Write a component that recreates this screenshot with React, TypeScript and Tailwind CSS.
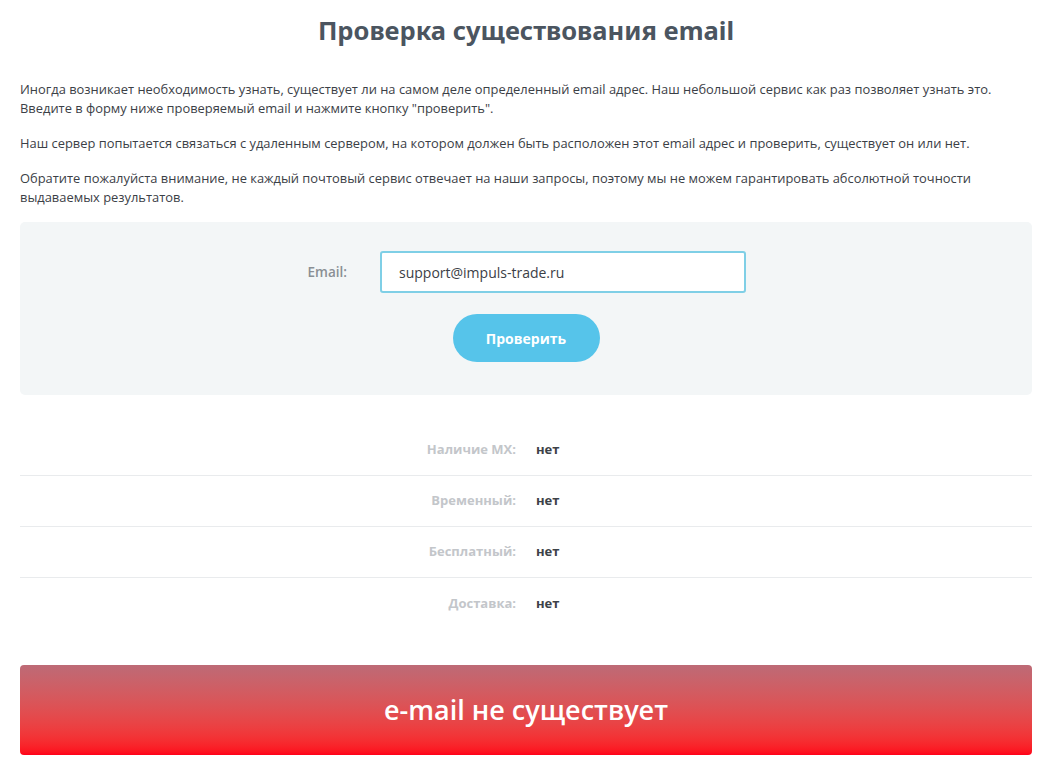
import React from 'react';

const rows = [
  { label: 'Наличие MX:', value: 'нет' },
  { label: 'Временный:', value: 'нет' },
  { label: 'Бесплатный:', value: 'нет' },
  { label: 'Доставка:', value: 'нет' },
];

const App = () => {
  return (
    <div className="min-h-screen bg-white px-5 pt-[14px] text-[#3b4046]" style={{ fontFamily: '"Open Sans", "Liberation Sans", sans-serif' }}>
      <h1 className="text-center text-[25.5px] leading-[32px] font-bold text-[#4b5560]" style={{ fontFamily: '"Noto Sans", sans-serif' }}>
        Проверка существования email
      </h1>

      <div className="mt-[34px] text-[12.9px] leading-[19px]">
        <p>
          Иногда возникает необходимость узнать, существует ли на самом деле определенный email адрес. Наш небольшой сервис как раз позволяет узнать это.
          <br />
          Введите в форму ниже проверяемый email и нажмите кнопку "проверить".
        </p>
        <p className="mt-[16px]">
          Наш сервер попытается связаться с удаленным сервером, на котором должен быть расположен этот email адрес и проверить, существует он или нет.
        </p>
        <p className="mt-[16px]">
          Обратите пожалуйста внимание, не каждый почтовый сервис отвечает на наши запросы, поэтому мы не можем гарантировать абсолютной точности выдаваемых результатов.
        </p>
      </div>

      <div className="mt-[15px] flex h-[173px] flex-col items-center rounded-[5px] bg-[#f3f6f7] pt-[29px]">
        <div className="flex items-center">
          <label className="w-[41px] text-right text-[13.5px] font-semibold text-[#8a8f94]">Email:</label>
          <input
            className="ml-[33px] h-[42px] w-[366px] rounded-[3px] border-2 border-[#7fcfe6] bg-white px-[17px] text-[14px] text-[#3b4046] outline-none"
            defaultValue="support@impuls-trade.ru"
          />
        </div>
        <button className="mt-[21px] h-[48px] w-[147px] rounded-full bg-[#56c4ea] text-[14px] font-bold text-white">
          Проверить
        </button>
      </div>

      <div className="mt-[30px]">
        {rows.map((r, i) => (
          <div
            key={r.label}
            className={`flex h-[51px] items-center text-[13px] font-bold ${i < rows.length - 1 ? 'border-b border-[#e9ebed]' : ''}`}
          >
            <div className="w-1/2 pr-[10px] text-right text-[#c3c6ca]">{r.label}</div>
            <div className="w-1/2 pl-[10px] text-[#3d4248]">{r.value}</div>
          </div>
        ))}
      </div>

      <div className="mt-[36px] flex h-[90px] items-center justify-center rounded-[4px] bg-gradient-to-b from-[#bd6a76] to-[#ff0018] text-[27px] font-semibold text-white">
        e-mail не существует
      </div>
    </div>
  );
};

export default App;
